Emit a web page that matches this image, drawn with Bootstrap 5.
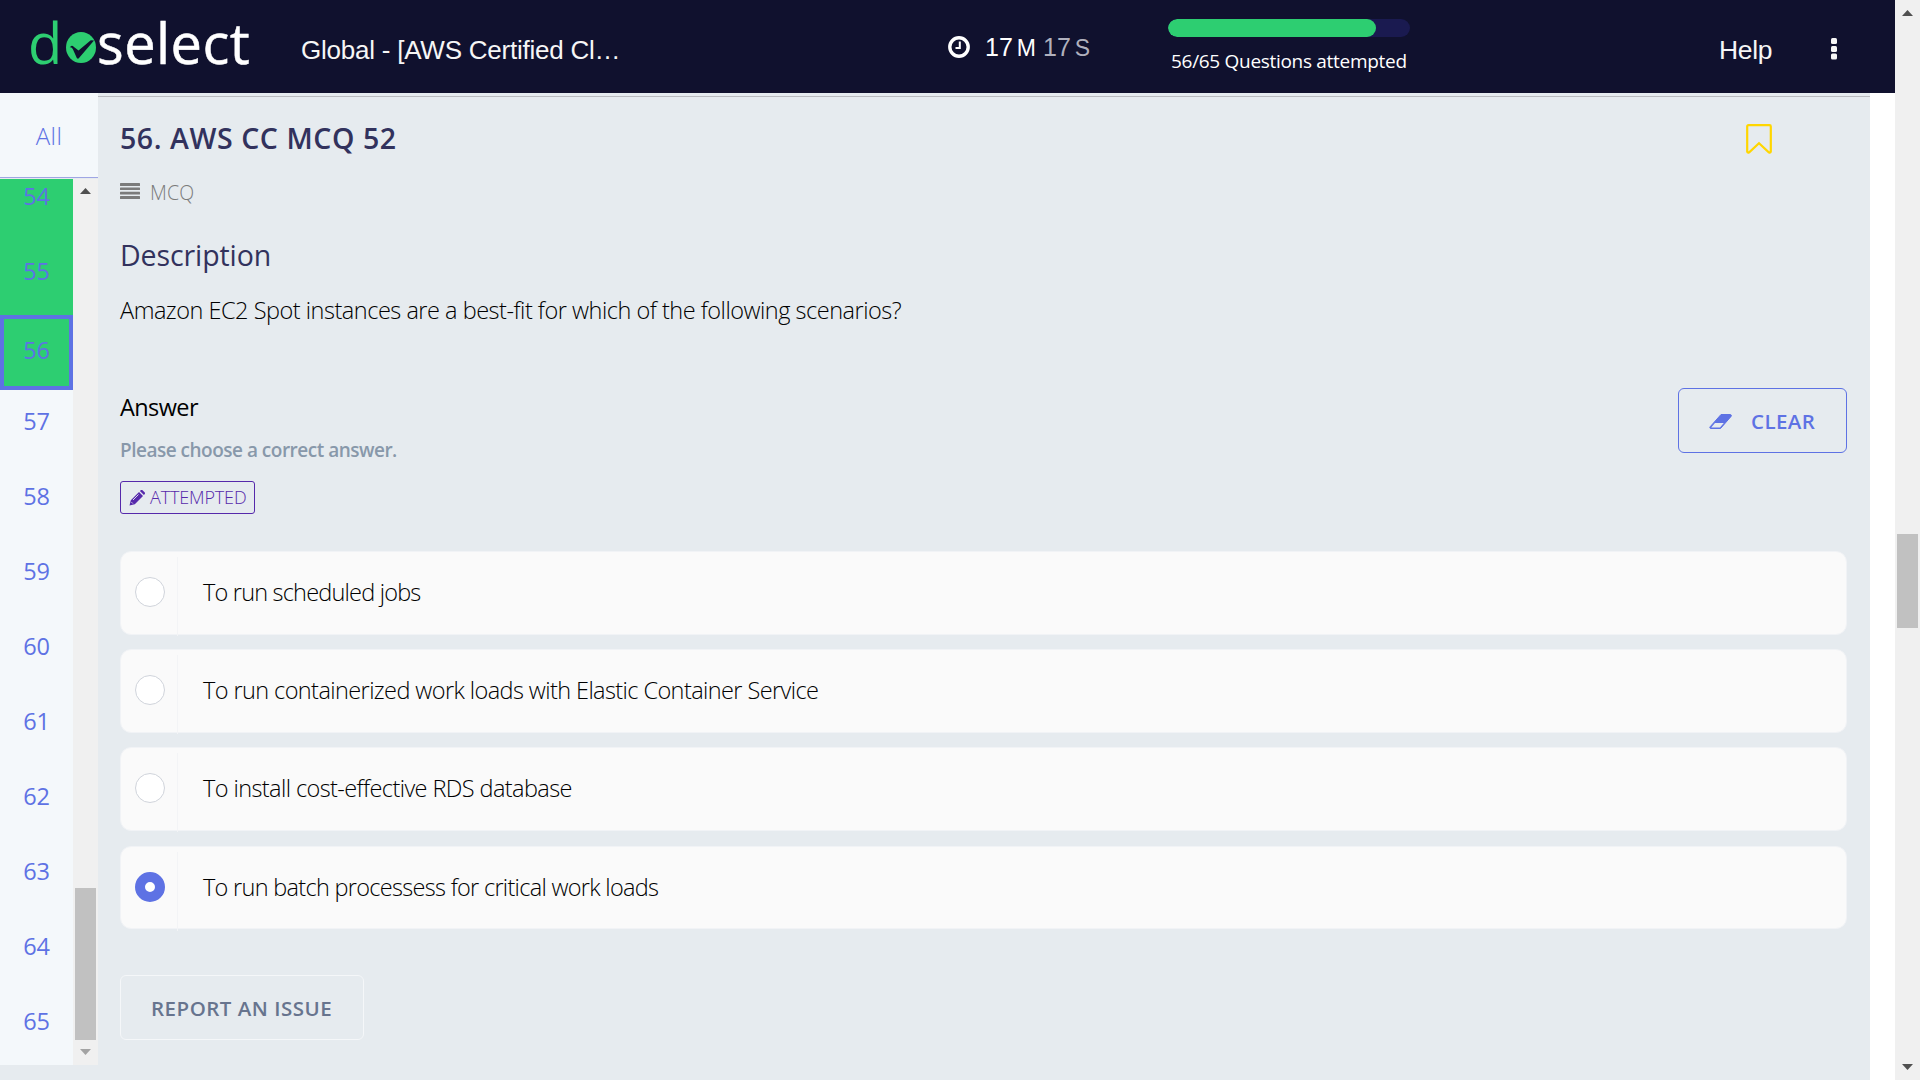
<!DOCTYPE html>
<html lang="en">
<head>
<meta charset="utf-8">
<title>DoSelect</title>
<link href="https://cdn.jsdelivr.net/npm/bootstrap@5.3.0/dist/css/bootstrap.min.css" rel="stylesheet">
<style>
body{font-family:"Open Sans","Noto Sans",sans-serif;background:#fff;height:1080px;overflow:hidden;color:#000}
span{white-space:nowrap}
.shell{height:1080px}
.content-col{width:1895px}
.topbar{height:93px;background:#10112e;color:#fff;font-family:"Liberation Sans",Arial,sans-serif;padding-left:28px}
.brand{font:500 56px/60px "Open Sans",sans-serif;width:225px;height:93px;padding-top:12px}
.brand .d{color:#2dce71;width:34px}
.brand svg{margin:20px 0 0 4px;flex:none}
.brand .sel{margin-left:1px;letter-spacing:.45px;-webkit-text-stroke:.5px #fff}
.test-name{font-size:26px;line-height:36px;width:330px;margin:32px 0 0 48px;color:#f6f6f6;letter-spacing:-.23px}
.timer{margin:36px 0 0 317px;height:24px;width:150px;font-size:25px;line-height:22px}
.timer .dim{color:#b0b0bd}
.unit{font-size:23px;line-height:24px}
.prog{width:242px;margin:19px 0 0 70px;font-family:"Open Sans",sans-serif}
.prog .progress{height:18px;border-radius:9px;background:#1a1a50}
.prog .progress-bar{background:#2dce71;border-radius:9px}
.prog-label{font-size:19px;line-height:28px;margin:10px 0 0 3px;letter-spacing:-.3px}
.help{font-size:26.5px;line-height:36px;margin:32px 0 0 309px;width:56px;color:#f6f6f6;letter-spacing:-.3px}
.dots{margin:38px 0 0 55px}
.side{width:98px}
.all-tab{height:85px;background:#f4f8fb;border-bottom:1px solid #9fa6e4;font-size:24px;line-height:86px;color:#5e72e4;font-weight:300;text-align:center;letter-spacing:.4px}
.side-body{height:886px;margin-top:1px;overflow:hidden}
.nums{width:73px;background:#f4f8fb;color:#5e72e4;font-size:23.5px;text-align:center;line-height:77px;letter-spacing:-.3px}
.nums div{height:75px;flex:none}
.nums .done{background:#2dce71}
.nums .first{margin-top:-21px}
.nums .tall{height:82px}
.nums .current{border:4px solid #5e72e4;line-height:63px}
.nums .after{height:68px;line-height:63px}
.vbar{width:25px;background:#f0f0f0}
.vbar .thumb{background:#c1c1c1;width:21px}
.side .vbar .thumb{height:152px;margin-top:694px}
.vbar svg{display:block;flex:none}
.vbar .arrow-top{margin-top:9px}
.page-bar .arrow-top{margin-top:10px}
.page-bar .thumb{height:94px;margin-top:518px}
.vbar .arrow-end{margin-top:9px}
.page-bar .arrow-end{margin-top:436px}
.lower{background:#e6ebef}
.gutter{width:25px}
.main{width:1772px;background:#e6ebef;padding-top:3px}
.main-in{border-top:1px solid #b9bbbf;padding:21px 23px 0 22px}
.q-title{font-size:28.5px;line-height:40px;font-weight:600;color:#32325d;letter-spacing:.57px}
.flag{margin:6px 75px 0 0}
.q-type{font-size:19.5px;line-height:32px;margin-top:19px;color:#7b7b7b;font-weight:350;height:30px;letter-spacing:.2px}
.q-type svg{margin:6px 10px 0 0}
.q-desc{font-size:28.5px;line-height:41px;margin-top:28px;color:#32325d;height:40px;letter-spacing:-.1px}
.q-text{font-size:23.5px;line-height:37px;font-weight:300;margin-top:17px;height:36px;letter-spacing:-.485px}
.ans-row{margin-top:60px;height:126px}
.ans-h{font-size:23.5px;line-height:36px;padding-top:1px;height:37px;letter-spacing:-.6px}
.ans-sub{font-size:19px;line-height:32px;font-weight:600;color:#8898aa;margin-top:9px;height:30px;letter-spacing:-.5px}
.att{margin-top:17px;height:33px;width:135px;border:1px solid #5629ab;border-radius:3px;color:#5629ab;font-size:18px;line-height:30px;font-weight:300;padding-left:8px;letter-spacing:-.15px}
.att svg{margin:8px 5px 0 0}
.clear-btn{width:169px;height:65px;border:1px solid #5e72e4;border-radius:6px;color:#5e72e4;font-size:20.5px;font-weight:600;line-height:30px;padding:17px 0 0 30px;letter-spacing:.4px}
.clear-btn svg{margin:8px 19px 0 0}
.opts{margin-top:37px;gap:14.6px}
.opt{height:83.6px;border-radius:11px;background:#fafafa;border:1px solid #f1f3f6}
.opt .pick{width:57px;padding:25px 0 0 14px;border-right:1px solid #f3f4f6;margin-top:5px;height:79px}
.dot-radio{width:30px;height:30px;border-radius:50%;border:1px solid #d0d4db;background:#fff;margin-top:-5px}
.dot-radio.on{border:10px solid #5e72e4}
.opt-t{font-size:23.5px;font-weight:300;line-height:37px;margin:22px 0 0 25px;letter-spacing:-.59px}
.opt-t.tight{letter-spacing:-.7px}
.opt-t.short{letter-spacing:-.8px}
.report{margin-top:46px;width:244px;height:65px;border:1px solid #f5f7f9;border-radius:6px;color:#67748e;font-size:20.5px;font-weight:600;line-height:64px;padding-left:30px;letter-spacing:.5px}
</style>
</head>
<body>
<div class="shell d-flex">
 <div class="content-col d-flex flex-column">
  <header class="topbar d-flex align-items-start">
   <div class="brand d-flex align-items-start"><span class="d">d</span><svg width="30" height="31" viewBox="0 0 30 31"><ellipse cx="15" cy="15.5" rx="15" ry="15.5" fill="#2dce71"/><path d="M3.800 15.500Q5.500 12.500 8 15L12.500 18.500L24.800 8.200L28 8.500L13 26Q12 27.500 10.800 26L6.800 17Q5.500 14.800 3.800 15.500z" fill="#10112e"/></svg><span class="sel">select</span></div>
   <div class="test-name"><span>Global - [AWS Certified Cl…</span></div>
   <div class="timer d-flex"><svg width="22" height="22" viewBox="0 0 22 22" fill="none" stroke="#fff"><circle cx="11" cy="11" r="9.2" stroke-width="3.4"/><path d="M11.8 5.5V12H7.500" stroke-width="2"/></svg><span style="margin-left:15px">17</span><span class="unit" style="margin-left:4px">M</span><span class="dim" style="margin-left:7px">17</span><span class="dim unit" style="margin-left:4px">S</span></div>
   <div class="prog"><div class="progress"><div class="progress-bar" style="width:86.15%"></div></div><div class="prog-label"><span>56/65 Questions attempted</span></div></div>
   <div class="help"><span>Help</span></div>
   <svg class="dots" width="8" height="22" viewBox="0 0 8 22" fill="#f6f6f6"><rect x="1" width="6" height="6" rx="1.5"/><rect x="1" y="8" width="6" height="6" rx="1.5"/><rect x="1" y="15.500" width="6" height="6" rx="1.5"/></svg>
  </header>
  <div class="d-flex flex-fill lower">
   <aside class="side">
    <div class="all-tab"><span>All</span></div>
    <div class="side-body d-flex">
     <div class="nums d-flex flex-column"><div class="done first">54</div><div class="done tall">55</div><div class="done current">56</div><div class="after">57</div><div>58</div><div>59</div><div>60</div><div>61</div><div>62</div><div>63</div><div>64</div><div>65</div></div>
     <div class="vbar d-flex flex-column align-items-center"><svg class="arrow-top" width="11" height="6"><path d="M0 6L5.500 0L11 6z" fill="#505050"/></svg><div class="thumb"></div><svg class="arrow-end" width="11" height="6"><path d="M0 0H11L5.500 6z" fill="#a3a3a3"/></svg></div>
    </div>
   </aside>
   <main class="main"><div class="main-in">
    <div class="d-flex justify-content-between align-items-start"><div class="q-title"><span>56. AWS CC MCQ 52</span></div>
     <svg class="flag" width="26" height="30" viewBox="0 0 26 30"><path d="M2.500 1.200H23.500Q24.800 1.200 24.800 2.500V27.500Q24.400 29.300 22.800 28.300L13 19.300L3.200 28.300Q1.600 29.300 1.200 27.500V2.500Q1.200 1.200 2.500 1.200z" fill="none" stroke="#ffd600" stroke-width="2.200"/></svg></div>
    <div class="q-type d-flex align-items-start"><svg width="20" height="16" fill="#7b7b7b"><rect width="20" height="3" rx=".5"/><rect y="4.500" width="20" height="2.500" rx=".5"/><rect y="8.800" width="20" height="2.700" rx=".5"/><rect y="13" width="20" height="3" rx=".5"/></svg><span>MCQ</span></div>
    <div class="q-desc"><span>Description</span></div>
    <div class="q-text"><span>Amazon EC2 Spot instances are a best-fit for which of the following scenarios?</span></div>
    <div class="ans-row d-flex justify-content-between align-items-start">
     <div><div class="ans-h"><span>Answer</span></div><div class="ans-sub"><span>Please choose a correct answer.</span></div>
     <div class="att d-flex align-items-start"><svg width="16" height="16" viewBox="0 0 16 16"><path d="M1.800 10.200L10 2L14 6L5.800 14.200L.5 15.500zM10.900 1.100L12 0Q12.800-.4 13.500.2L15.800 2.500Q16.300 3.300 15.800 4L14.900 5z" fill="#5629ab"/><path d="M4 10L9.500 4.500M2.500 12.200L3.800 13.500" stroke="#e6ebef" stroke-width=".9"/></svg><span>ATTEMPTED</span></div></div>
     <div class="clear-btn d-flex align-items-start"><svg width="23" height="16" viewBox="0 0 23 16"><path d="M12 .5H21.500Q23 .8 22 2.500L11.500 14.500H1.500Q.3 14.300 1.200 12.700z" fill="#5e72e4" stroke="#5e72e4"/><path d="M6 9H14.800L11 13.500H2.200z" fill="#e6ebef"/></svg><span>CLEAR</span></div>
    </div>
    <div class="opts d-flex flex-column">
     <div class="opt d-flex"><div class="pick"><div class="dot-radio"></div></div><div class="opt-t short"><span>To run scheduled jobs</span></div></div>
     <div class="opt d-flex"><div class="pick"><div class="dot-radio"></div></div><div class="opt-t"><span>To run containerized work loads with Elastic Container Service</span></div></div>
     <div class="opt d-flex"><div class="pick"><div class="dot-radio"></div></div><div class="opt-t"><span>To install cost-effective RDS database</span></div></div>
     <div class="opt d-flex"><div class="pick"><div class="dot-radio on"></div></div><div class="opt-t tight"><span>To run batch processess for critical work loads</span></div></div>
    </div>
    <div class="report"><span>REPORT AN ISSUE</span></div>
   </div></main>
   <div class="gutter bg-white"></div>
  </div>
 </div>
 <div class="vbar page-bar d-flex flex-column align-items-center"><svg class="arrow-top" width="11" height="6"><path d="M0 6L5.500 0L11 6z" fill="#505050"/></svg><div class="thumb"></div><svg class="arrow-end" width="11" height="6"><path d="M0 0H11L5.500 6z" fill="#505050"/></svg></div>
</div>
<script src="https://cdn.jsdelivr.net/npm/bootstrap@5.3.0/dist/js/bootstrap.bundle.min.js"></script>
</body>
</html>
